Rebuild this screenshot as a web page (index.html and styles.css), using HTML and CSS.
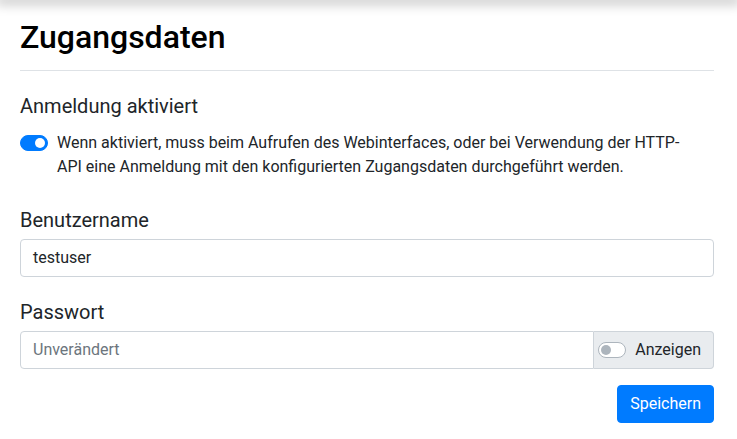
FILE: index.html
```html
<!DOCTYPE html>
<html lang="de">
<head>
<meta charset="utf-8">
<link rel="stylesheet" href="styles.css">
</head>
<body>
<div class="topshadow"></div>
<main class="page">
  <h2 class="title">Zugangsdaten</h2>
  <hr class="rule">
  <h5 class="section">Anmeldung aktiviert</h5>
  <div class="switch-row">
    <span class="switch on"><span class="knob"></span></span>
    <p class="desc">Wenn aktiviert, muss beim Aufrufen des Webinterfaces, oder bei Verwendung der HTTP-API eine Anmeldung mit den konfigurierten Zugangsdaten durchgeführt werden.</p>
  </div>
  <label class="label">Benutzername</label>
  <div class="input"><span class="value">testuser</span></div>
  <label class="label">Passwort</label>
  <div class="group">
    <div class="input grow"><span class="placeholder">Unverändert</span></div>
    <div class="addon"><span class="switch off"><span class="knob"></span></span><span>Anzeigen</span></div>
  </div>
  <div class="actions"><button class="btn">Speichern</button></div>
</main>
</body>
</html>
```
FILE: styles.css
```css
* { box-sizing: border-box; }
body {
  margin: 0;
  font-family: Roboto, "Liberation Sans", sans-serif;
  color: #212529;
  background: #fff;
  font-size: 16px;
  line-height: 1.5;
}
.topshadow {
  height: 0;
  box-shadow: 0 0 12px 4px rgba(0,0,0,0.25);
}
.page {
  padding: 18px 23px 0 20px;
}
.title {
  margin: 0 0 8px;
  font-size: 32px;
  font-weight: 500;
  line-height: 1.2;
  color: #000;
}
.rule {
  margin: 14px 0 23px;
  border: 0;
  border-top: 1px solid #dee2e6;
}
.section {
  margin: 0 0 13px;
  font-size: 20px;
  font-weight: 400;
  line-height: 1.2;
}
.switch-row {
  display: flex;
  align-items: flex-start;
  gap: 9px;
  margin-bottom: 29px;
  padding-right: 24px;
}
.switch {
  flex: none;
  position: relative;
  display: inline-block;
  width: 28px;
  height: 16px;
  border-radius: 8px;
  margin-top: 4px;
}
.switch.on { background: #007bff; border: 1px solid #007bff; }
.switch.off { background: #fff; border: 1px solid #adb5bd; }
.knob {
  position: absolute;
  top: 2px;
  width: 10px;
  height: 10px;
  border-radius: 50%;
}
.switch.on .knob { left: 14px; background: #fff; }
.switch.off .knob { left: 2px; background: #adb5bd; }
.desc {
  margin: 0;
  font-size: 16px;
  line-height: 24px;
}
.label {
  display: block;
  font-size: 20px;
  line-height: 1.2;
  margin-bottom: 7px;
}
.input {
  height: 38px;
  border: 1px solid #ced4da;
  border-radius: 4px;
  padding: 0 12px;
  display: flex;
  align-items: center;
  font-size: 16px;
  margin-bottom: 23px;
}
.placeholder { color: #6c757d; }
.group {
  display: flex;
  margin-bottom: 16px;
}
.group .input {
  margin-bottom: 0;
  border-radius: 4px 0 0 4px;
}
.grow { flex: 1; }
.addon {
  display: flex;
  align-items: center;
  gap: 9px;
  height: 38px;
  padding: 0 12px 0 4px;
  background: #e9ecef;
  border: 1px solid #ced4da;
  border-left: 0;
  border-radius: 0 4px 4px 0;
  font-size: 16px;
}
.addon .switch { margin-top: 0; }
.actions {
  display: flex;
  justify-content: flex-end;
}
.btn {
  font-family: inherit;
  font-size: 16px;
  line-height: 1.5;
  color: #fff;
  background: #007bff;
  border: 1px solid #007bff;
  border-radius: 4px;
  padding: 6px 12px;
  height: 38px;
}
```
